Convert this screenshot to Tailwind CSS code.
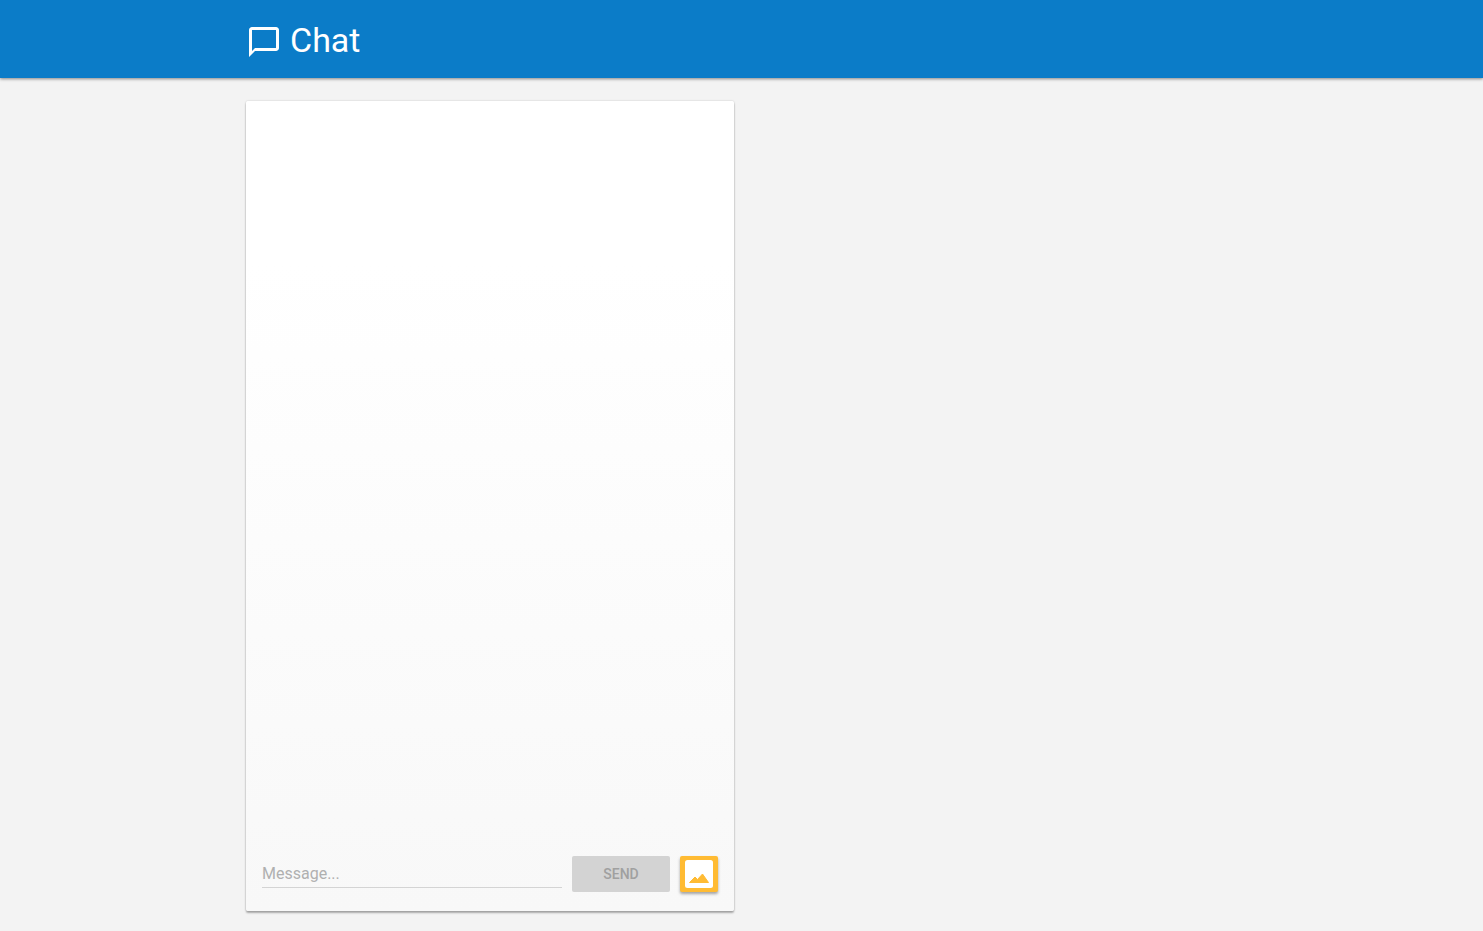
<!DOCTYPE html>
<html lang="en">

<head>
    <meta charset="UTF-8">
    <meta name="viewport" content="width=device-width, initial-scale=1.0">
    <title>Chat</title>
    <script src="https://cdn.jsdelivr.net/npm/@tailwindcss/browser@4"></script>
</head>

<body class="h-[931px] overflow-hidden bg-[#f3f3f3] font-['Roboto',sans-serif]">
    <header class="flex h-[78px] items-center bg-[#0b7cc8] pl-[246px] shadow-[0_1px_3px_rgba(0,0,0,0.45)]">
        <svg class="mt-[6px] h-9 w-9 fill-white" viewBox="0 0 24 24">
            <path d="M20 2H4c-1.1 0-2 .9-2 2v18l4-4h14c1.1 0 2-.9 2-2V4c0-1.1-.9-2-2-2zm0 14H6l-2 2V4h16v12z" />
        </svg>
        <h1 class="ml-2 mt-[2px] text-[34px] leading-none text-white">Chat</h1>
    </header>

    <main class="pl-[246px] pt-[23px]">
        <section class="flex h-[810px] w-[488px] flex-col justify-end rounded-[2px] bg-gradient-to-b from-white from-20% to-[#f8f8f8] px-4 pb-[19px] shadow-[0_2px_2px_rgba(0,0,0,0.3),0_0_2px_rgba(0,0,0,0.2)]">
            <div class="flex items-start">
                <div class="w-[300px] border-b border-[#d4d4d4] pb-[3px] pt-2 text-[16px] leading-5 text-[#b0b0b0]">Message...</div>
                <button class="ml-[10px] h-9 w-[98px] rounded-[2px] bg-[#d3d3d3] text-[14px] font-medium text-[#a0a0a0]">SEND</button>
                <button class="ml-[10px] flex h-9 w-[38px] items-center justify-center rounded-[2px] bg-[#ffbb33] shadow-[0_2px_3px_rgba(0,0,0,0.35)]">
                    <svg class="h-[28px] w-[28px]" viewBox="0 0 28 28">
                        <rect width="28" height="28" rx="2.5" fill="#fff" />
                        <path d="M4.500 22.500l5.500-5.500 2.500 2.500 5-5.500 6 8.500z" fill="#ffbb33" stroke="#ffbb33" stroke-width="1" stroke-linejoin="round" />
                    </svg>
                </button>
            </div>
        </section>
    </main>
</body>

</html>
